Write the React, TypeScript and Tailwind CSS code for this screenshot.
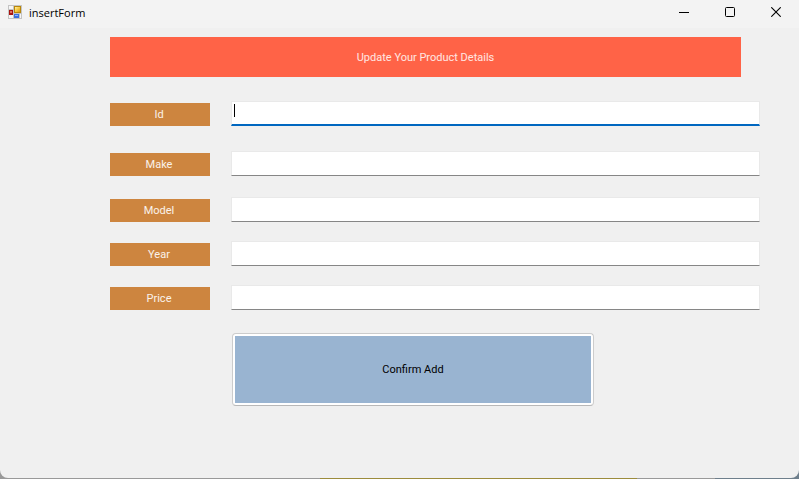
import React from "react";

const fields = [
  { id: "id", label: "Id", gap: "mt-6", active: true },
  { id: "make", label: "Make", gap: "mt-[25px]", active: false },
  { id: "model", label: "Model", gap: "mt-[21px]", active: false },
  { id: "year", label: "Year", gap: "mt-[19px]", active: false },
  { id: "price", label: "Price", gap: "mt-[19px]", active: false },
];

function FormIcon() {
  return (
    <svg width="14" height="14" viewBox="0 0 14 14" shapeRendering="crispEdges" aria-hidden="true">
      <defs>
        <linearGradient id="gold" x1="0" y1="0" x2="1" y2="1">
          <stop offset="0" stopColor="#fff0a0" />
          <stop offset="0.5" stopColor="#f5c842" />
          <stop offset="1" stopColor="#d49a10" />
        </linearGradient>
      </defs>
      <rect width="14" height="14" fill="#c4c4c4" />
      <rect x="1" y="1" width="4" height="3" fill="#f6f6f6" />
      <rect x="1" y="10" width="4" height="3" fill="#f6f6f6" />
      <rect x="12" y="9" width="1" height="4" fill="#f6f6f6" />
      <rect x="1" y="5" width="4" height="5" fill="#a81410" />
      <rect x="2" y="6" width="2" height="2" fill="#e0705c" />
      <rect x="6" y="1" width="7" height="7" fill="#b8860b" />
      <rect x="7" y="2" width="5" height="5" fill="url(#gold)" />
      <rect x="6" y="9" width="5" height="4" fill="#3a6fdc" />
      <rect x="7" y="10" width="3" height="1" fill="#8db4ff" />
    </svg>
  );
}

function TitleBar() {
  const control = "flex h-7 w-[46px] items-center justify-center pb-1";
  return (
    <header className="flex h-7 items-start bg-[#f3f3f3] pl-2">
      <div className="flex h-[26px] items-center gap-[7px] pb-[2px]">
        <FormIcon />
        <h1 className="pt-[2px] font-['Open_Sans',sans-serif] text-[11px] leading-4 text-black">insertForm</h1>
      </div>
      <div className="ml-auto flex">
        <button type="button" aria-label="Minimize" className={control}>
          <svg width="10" height="10" shapeRendering="crispEdges">
            <path d="M0 5.5H10" stroke="#000" />
          </svg>
        </button>
        <button type="button" aria-label="Maximize" className={control}>
          <svg width="10" height="10">
            <rect x="0.5" y="0.5" width="9" height="9" rx="1" fill="none" stroke="#000" />
          </svg>
        </button>
        <button type="button" aria-label="Close" className={control}>
          <svg width="10" height="10">
            <path d="M0.3 0.3L9.7 9.7M9.7 0.3L0.3 9.7" stroke="#000" strokeWidth="1.1" />
          </svg>
        </button>
      </div>
    </header>
  );
}

export default function App() {
  return (
    <div className="flex min-h-screen flex-col bg-[linear-gradient(to_right,#999_320px,#9c8c3c_320px,#9c8c3c_637px,#999_637px,#999_715px,#6e7f8c_715px)] pb-px font-['Roboto',sans-serif] text-[11px] leading-4">
      <div className="flex-1 overflow-hidden rounded-b-lg bg-[#f0f0f0]">
        <TitleBar />
        <form className="pt-[9px] pr-[39px] pb-10 pl-[110px]" onSubmit={(e) => e.preventDefault()}>
          <h2 className="mr-[19px] flex h-10 items-center justify-center bg-[#ff6347] pt-[2px] text-white/85">
            Update Your Product Details
          </h2>
          {fields.map((field) => (
            <div key={field.id} className={`flex items-end gap-[21px] ${field.gap}`}>
              <label
                htmlFor={field.id}
                className="flex h-[23px] w-[100px] shrink-0 items-center justify-center bg-[#cd853f] pr-[2px] text-white/90"
              >
                {field.label}
              </label>
              <div className="relative flex flex-1">
                <input
                  id={field.id}
                  type="text"
                  className={`peer h-[25px] w-full min-w-0 border border-[#e9e9e9] bg-white px-[3px] outline-none ${
                    field.active ? "border-b-2 border-b-[#0067c0]" : "border-b-[#868686]"
                  }`}
                />
                {field.active && (
                  <span className="pointer-events-none absolute top-[3px] left-[3px] h-[13px] w-px bg-black peer-focus:hidden" />
                )}
              </div>
            </div>
          ))}
          <button
            type="submit"
            className="mt-[23px] ml-[122px] flex h-[73px] w-[362px] items-center justify-center rounded border border-[#cccccc] border-b-[#b8b8b8] bg-white p-[2px] text-black"
          >
            <span className="flex h-full w-full items-center justify-center bg-[#99b4d1]">Confirm Add</span>
          </button>
        </form>
      </div>
    </div>
  );
}
